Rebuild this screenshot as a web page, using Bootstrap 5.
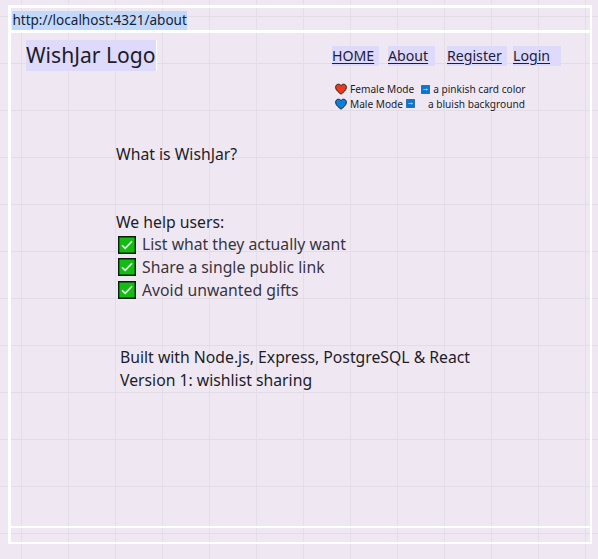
<!DOCTYPE html>
<html lang="en">
<head>
<meta charset="utf-8">
<meta name="viewport" content="width=device-width, initial-scale=1">
<title>WishJar – About</title>
<link href="https://cdn.jsdelivr.net/npm/bootstrap@5.3.0/dist/css/bootstrap.min.css" rel="stylesheet">
<style>
body{font-family:"Noto Sans",sans-serif;color:#211c27;height:559px;overflow:hidden;padding:5px 6px 15px 8px;
 background:linear-gradient(90deg,#e4dee9 1px,transparent 1px) 21px 0/47px 47px,linear-gradient(#e2dce7 1px,transparent 1px) 0 16px/47px 47px,#efe8f3}
.frame{width:584px;height:539px;border:3px solid #fff;border-right-width:2px;border-bottom-width:2px}
.address{height:25px;border-bottom:3px solid #fff;padding:3px 0 0 1px}
.address span{background:#c3d9f9;font-size:13.55px;line-height:19px;height:19px;width:175px;padding-left:.4px;color:#17213a}
.topbar{height:40px;padding:7px 29px 0 15px}
.logo{font-size:21.1px;line-height:30px;width:131px;height:31px;background:#dedafb;border-right:1px solid #fff}
.menu{padding-top:6px}
.menu a{font-size:14.15px;line-height:20px;height:20px;background:#dedafb;color:#211c3b;text-decoration:underline;text-underline-offset:2px}
.menu .link-home{width:47px;margin-right:9px}
.menu .link-about{width:47px;margin-right:12px}
.menu .link-register{width:60px;margin-right:6px}
.menu .link-login{width:48px}
.modes{font-size:10.12px;line-height:14.5px;padding:9px 0 0 324px}
.modes svg{flex:none}
.mode-name{margin:0 6.5px 0 3px}
.mode-name.male{margin-right:3.5px}
.mode-note{margin-left:3.5px}
.mode-note.male{margin-left:12.5px}
.page-copy{font-size:15.76px;line-height:22.6px;padding-left:105px}
.page-copy li{height:22.6px;color:#38343f}
.page-copy li svg{margin:0 6px 0 2px}
.intro{padding-top:32px}
.lead-in{padding-top:45.2px}
.stack-note{padding:45px 0 0 4px}
.bottom-line{border-top:2px solid #fff;height:16px}
</style>
</head>
<body>
<svg class="d-none">
 <symbol id="heart" viewBox="0 0 12 12"><path d="M6 11.2C4.2 9.7.6 7.4.6 4.3.6.8 4.7.3 6 2.6 7.3.3 11.4.8 11.4 4.3 11.4 7.4 7.8 9.7 6 11.2Z" stroke="#222" stroke-width="1"/></symbol>
 <symbol id="arrow" viewBox="0 0 9 9"><path fill="#0b76d1" stroke="#16508b" stroke-width=".7" d="M.4.4h8.2v8.2H.4z"/><path d="M2.3 4.5h4M5.3 3.6l1.3.9-1.3.9" fill="none" stroke="#a5cff2" stroke-width=".8"/></symbol>
 <symbol id="check" viewBox="0 0 18 18"><path fill="#12bd12" stroke="#0c1c10" stroke-width="1.4" d="M.7.7h16.6v16.6H.7z"/><path d="M4 9.3l3.2 3.1L14 5.3" fill="none" stroke="#f2fff0" stroke-width="1.6"/></symbol>
</svg>
<div class="frame d-flex flex-column">
 <div class="address d-flex flex-shrink-0"><span class="text-nowrap">http://localhost:4321/about</span></div>
 <header class="topbar d-flex justify-content-between flex-shrink-0">
  <div class="logo text-nowrap">WishJar Logo</div>
  <nav class="menu d-flex text-nowrap">
   <a href="#" class="link-home">HOME</a>
   <a href="#" class="link-about">About</a>
   <a href="#" class="link-register">Register</a>
   <a href="#" class="link-login">Login</a>
  </nav>
 </header>
 <div class="modes text-nowrap">
  <div class="d-flex align-items-center"><svg width="12" height="12" fill="#f03a17"><use href="#heart"/></svg><span class="mode-name">Female Mode</span><svg width="9" height="9"><use href="#arrow"/></svg><span class="mode-note">a pinkish card color</span></div>
  <div class="d-flex align-items-center"><svg width="12" height="12" fill="#0b7fdf"><use href="#heart"/></svg><span class="mode-name male">Male Mode</span><svg width="9" height="9"><use href="#arrow"/></svg><span class="mode-note male">a bluish background</span></div>
 </div>
 <main class="page-copy flex-grow-1 text-nowrap">
  <p class="intro mb-0">What is WishJar?</p>
  <p class="lead-in mb-0">We help users:</p>
  <ul class="list-unstyled mb-0">
   <li class="d-flex align-items-center"><svg width="18" height="18"><use href="#check"/></svg>List what they actually want</li>
   <li class="d-flex align-items-center"><svg width="18" height="18"><use href="#check"/></svg>Share a single public link</li>
   <li class="d-flex align-items-center"><svg width="18" height="18"><use href="#check"/></svg>Avoid unwanted gifts</li>
  </ul>
  <p class="stack-note mb-0">Built with Node.js, Express, PostgreSQL &amp; React<br>Version 1: wishlist sharing</p>
 </main>
 <footer class="bottom-line flex-shrink-0"></footer>
</div>
<script src="https://cdn.jsdelivr.net/npm/bootstrap@5.3.0/dist/js/bootstrap.bundle.min.js"></script>
</body>
</html>
